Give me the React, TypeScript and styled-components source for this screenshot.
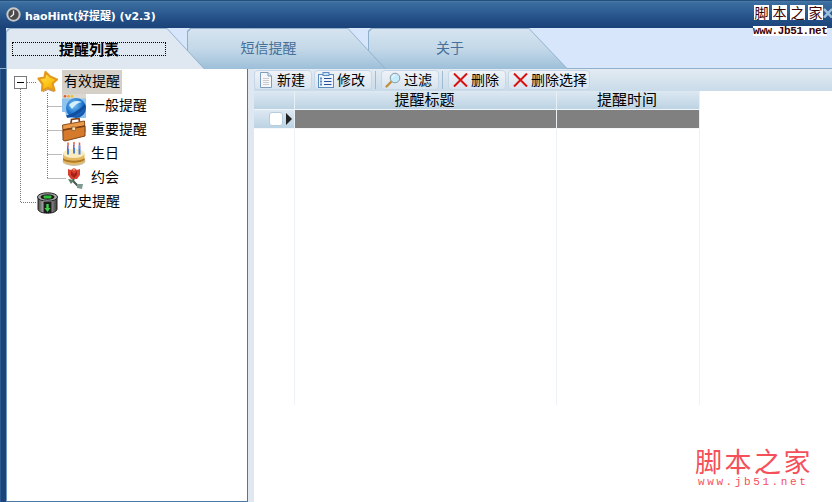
import React from "react";
import styled, { createGlobalStyle } from "styled-components";

const CJK = `"Noto Sans CJK SC", "Liberation Sans", sans-serif`;

const Global = createGlobalStyle`
  html, body { margin: 0; padding: 0; background: #fff; overflow: hidden; }
  * { box-sizing: border-box; }
`;

const Window = styled.div`
  position: relative;
  width: 832px;
  height: 502px;
  overflow: hidden;
  display: flex;
  flex-direction: column;
  background: #fff;
  font-family: ${CJK};
  color: #000;
`;

const TitleBar = styled.div`
  height: 28px;
  flex: none;
  display: flex;
  align-items: center;
  gap: 4px;
  padding: 0 0 0 6px;
  border-top: 1px solid #24507f;
  background: linear-gradient(#4d7aa8 0, #3a6c9f 2px, #2f5f94 10px, #234f85 18px, #1b4279 100%);
`;

const TitleText = styled.span`
  font-family: "DejaVu Sans", "Noto Sans CJK SC", sans-serif;
  font-weight: 700;
  font-size: 11px;
  letter-spacing: -0.1px;
  color: #fff;
  white-space: nowrap;
`;

const TabStrip = styled.div`
  height: 41px;
  flex: none;
  display: flex;
  padding-left: 6px;
  background: #d8e6fb;
  border-bottom: 1px solid #90b0cc;
  box-shadow: inset 6px 0 0 #1c4478;
`;

const Tab = styled.div<{ $width: number; $slant: number; $z: number; $active?: boolean; $pad: number; $overlap: number }>`
  position: relative;
  z-index: ${(p) => p.$z};
  width: ${(p) => p.$width}px;
  margin-left: ${(p) => -p.$overlap}px;
  height: 41px;
  padding-right: ${(p) => p.$pad}px;
  display: flex;
  align-items: center;
  justify-content: center;
  font-size: 14px;
  color: ${(p) => (p.$active ? "#000" : "#46709a")};
  background: #8fb0cc;
  clip-path: polygon(3px 0, ${(p) => p.$width - p.$slant}px 0, ${(p) => p.$width}px 100%, 0 100%, 0 3px);

  &::before {
    content: "";
    position: absolute;
    inset: 1px 0 0 1px;
    background: ${(p) => (p.$active ? "#dfe8f1" : "linear-gradient(#d6e4f0, #c3d8e8 50%, #9dbfd9)")};
    clip-path: polygon(3px 0, ${(p) => p.$width - p.$slant - 1}px 0, ${(p) => p.$width - 2}px 100%, 0 100%, 0 3px);
  }
`;

const TabLabel = styled.span`
  position: relative;
  line-height: 14px;
  margin-bottom: 3px;
`;

const FocusBox = styled.span`
  position: relative;
  width: 154px;
  height: 14px;
  margin-top: 1px;
  padding-bottom: 1px;
  display: flex;
  align-items: center;
  justify-content: center;
  border: 1px dotted #000;
  font-weight: 700;
  font-size: 15px;
  line-height: 12px;
`;

const Body = styled.div`
  flex: 1;
  display: flex;
  min-height: 0;
`;

const LeftEdge = styled.div`
  width: 6px;
  flex: none;
  background: linear-gradient(90deg, #2a5a90 0, #2a5a90 1px, #1c4478 1px);
`;

const TreePanel = styled.div`
  position: relative;
  width: 242px;
  flex: none;
  background: #fff;
  border: 1px solid #4a79a8;
  border-left-color: #6f98c0;
  border-top: 0;
  padding-top: 1px;
`;

const TreeLines = styled.svg`
  position: absolute;
  left: 0;
  top: 0;
  pointer-events: none;
`;

const TreeRow = styled.div<{ $level: number }>`
  position: relative;
  height: 24px;
  display: flex;
  align-items: center;
  padding-left: ${(p) => (p.$level === 0 ? 29 : 55)}px;
`;

const TreeIcon = styled.span`
  width: 24px;
  height: 24px;
  flex: none;
  display: block;
  & > svg { display: block; overflow: visible; }
`;

const TreeLabel = styled.span<{ $selected?: boolean; $level: number }>`
  height: 24px;
  margin-left: ${(p) => (p.$level === 0 ? 2 : 3)}px;
  padding: 0 2px;
  background: ${(p) => (p.$selected ? "#d4d0c8" : "transparent")};
  font-size: 14px;
  line-height: 21px;
  white-space: nowrap;
`;

const Expander = styled.span`
  position: absolute;
  left: 7px;
  top: 6px;
  width: 13px;
  height: 13px;
  border: 1px solid #7a7a7a;
  background: #fff;
  &::after {
    content: "";
    position: absolute;
    left: 2px;
    right: 2px;
    top: 5px;
    height: 1px;
    background: #000;
  }
`;

const Gutter = styled.div`
  width: 6px;
  flex: none;
  background: #dfe8f1;
`;

const Right = styled.div`
  flex: 1;
  display: flex;
  flex-direction: column;
  min-width: 0;
  background: #fff;
`;

const Toolbar = styled.div`
  height: 22px;
  flex: none;
  display: flex;
  align-items: flex-start;
  padding-top: 1px;
  background: linear-gradient(#e3ebf3, #c9dbe9);
`;

const ToolButton = styled.div<{ $width: number; $gap?: number }>`
  width: ${(p) => p.$width}px;
  margin-left: ${(p) => p.$gap ?? 0}px;
  height: 20px;
  flex: none;
  display: flex;
  align-items: center;
  gap: 3px;
  padding-left: 3px;
  border: 1px solid #c6d8e7;
  border-radius: 4px;
  background: linear-gradient(#eff3f7, #d8e4ef);
  font-size: 14px;
  white-space: nowrap;
  & > svg { flex: none; }
`;

const ToolText = styled.span`
  line-height: 16px;
  margin-bottom: 2px;
`;

const ToolSep = styled.span<{ $left: number; $right: number }>`
  width: 1px;
  height: 18px;
  margin: 1px ${(p) => p.$right}px 0 ${(p) => p.$left}px;
  flex: none;
  background: #9dbbd3;
`;

const Grid = styled.div`
  width: 446px;
  display: grid;
  grid-template-columns: 41px 262px 143px;
  grid-template-rows: 19px 19px 276px;
`;

const HeadCell = styled.div`
  display: flex;
  align-items: center;
  justify-content: center;
  padding: 0 2px 2px 0;
  border-right: 1px solid #e8f0f6;
  border-bottom: 1px solid #f0f5f9;
  background: linear-gradient(#dde8f2, #bcd3e3);
  font-size: 15px;
  line-height: 16px;
`;

const RowHead = styled.div`
  display: flex;
  align-items: center;
  justify-content: flex-end;
  gap: 3px;
  padding-right: 2px;
  border-right: 1px solid #e8f0f6;
  border-bottom: 1px solid #f5f8fb;
  background: linear-gradient(#dde8f2, #bcd3e3);
`;

const RowCheck = styled.span`
  width: 14px;
  height: 14px;
  background: #fff;
  border: 1px solid #b4cde0;
  border-radius: 3px;
`;

const RowArrow = styled.span`
  width: 0;
  height: 0;
  border-left: 6px solid #222;
  border-top: 6px solid transparent;
  border-bottom: 6px solid transparent;
`;

const SelCell = styled.div`
  background: #808080;
  border-right: 1px solid #e8f0f6;
  border-bottom: 1px solid #f5f8fb;
`;

const EmptyCell = styled.div`
  background: #fff;
  border-right: 1px solid #edf2f8;
`;

const MarkTop = styled.div`
  position: absolute;
  left: 754px;
  top: 5px;
  display: flex;
  gap: 3px;
`;

const MarkTopChar = styled.span`
  width: 15px;
  height: 15px;
  background: #fff;
  color: #3c0000;
  font-size: 14px;
  line-height: 15px;
  text-align: center;
`;

const MarkTopUrl = styled.div`
  position: absolute;
  left: 753px;
  top: 26px;
  width: 74px;
  height: 10px;
  background: #fff;
  color: #3c0000;
  font-family: "Liberation Mono", monospace;
  font-size: 11px;
  font-weight: 700;
  line-height: 10px;
  letter-spacing: -0.4px;
  white-space: nowrap;
`;

const CloseMark = styled.svg`
  position: absolute;
  left: 823px;
  top: 8px;
`;

const MarkBottom = styled.div`
  position: absolute;
  left: 695px;
  top: 444px;
  width: 118px;
  color: #f5505a;
`;

const MarkBottomTitle = styled.div`
  font-size: 27px;
  line-height: 33px;
  height: 33px;
  letter-spacing: 2.5px;
  white-space: nowrap;
`;

const MarkBottomUrl = styled.div`
  font-family: "Liberation Mono", monospace;
  font-size: 11px;
  line-height: 11px;
  letter-spacing: 2.6px;
  padding-left: 3px;
  white-space: nowrap;
`;

const ClockIcon = () => (
  <svg width="15" height="15" viewBox="0 0 15 15">
    <circle cx="7.5" cy="7.5" r="6.2" fill="#4a4a4a" stroke="#c8c8c8" strokeWidth="2" />
    <path d="M7.5 3.5V7.5L4.5 10" stroke="#f2f2f2" strokeWidth="1.3" fill="none" />
  </svg>
);

const StarIcon = () => (
  <svg width="24" height="24" viewBox="0 0 24 24">
    <defs>
      <linearGradient id="st" x1="0.2" y1="0" x2="0.8" y2="1">
        <stop offset="0" stopColor="#ffe35a" />
        <stop offset="0.6" stopColor="#fdc413" />
        <stop offset="1" stopColor="#f09a10" />
      </linearGradient>
    </defs>
    <path d="M9.500 2 L14 6.500 L21 9.500 L16.500 13.500 L18.500 20.500 L12 18 L6 20.500 L6.500 14 L2.500 8.500 L8.500 7.500 Z" fill="url(#st)" stroke="#e39a1c" strokeWidth="2.200" strokeLinejoin="round" />
    <path d="M7 21.500 L12 19.500 L18 21.500" fill="none" stroke="#c09060" strokeWidth="1" />
  </svg>
);

const WebIcon = () => (
  <svg width="24" height="24" viewBox="0 0 24 24">
    <defs>
      <radialGradient id="gl" cx="0.4" cy="0.35" r="0.7">
        <stop offset="0" stopColor="#7fc4f2" />
        <stop offset="0.6" stopColor="#1f77d0" />
        <stop offset="1" stopColor="#0f4aa0" />
      </radialGradient>
    </defs>
    <rect x="0" y="0" width="24" height="24" fill="#8fc3ee" />
    <rect x="0" y="0" width="24" height="4.500" fill="#dcd8d0" />
    <circle cx="3" cy="2.200" r="1.300" fill="#e05a30" />
    <circle cx="6.500" cy="2.200" r="1.300" fill="#eda820" />
    <circle cx="10" cy="2.200" r="1.300" fill="#e8c030" />
    <circle cx="14" cy="14" r="10" fill="url(#gl)" />
    <path d="M7 11 Q12 5 20 8 Q14 9 10 15Z" fill="#d6effc" />
    <path d="M0 22 Q11 22 23 10 L24 13 Q13 25 2 24 H0Z" fill="#124f9e" />
    <path d="M0 18 H3 L5 24 H0Z" fill="#fff" />
  </svg>
);

const CaseIcon = () => (
  <svg width="24" height="24" viewBox="0 0 24 24">
    <path d="M9 5 L9.500 1.500 L17 0.500 L17.500 4" fill="none" stroke="#7a3f16" strokeWidth="1.700" />
    <path d="M0.500 7 L22.500 3 L23 14 L1.500 19Z" fill="#ea9a48" stroke="#8a4f1e" />
    <path d="M1 12 L23 8 L23 18 L3 23 L1 22Z" fill="#d57a2a" stroke="#7a4516" />
    <path d="M1 12 L23 8" stroke="#7a3f16" strokeWidth="1.400" />
    <rect x="10" y="9" width="3.500" height="3.500" fill="#f2e2b0" stroke="#7a4516" strokeWidth="0.600" />
  </svg>
);

const CakeIcon = () => (
  <svg width="24" height="24" viewBox="0 0 24 24">
    <ellipse cx="12" cy="19" rx="11.500" ry="5" fill="#c8bfa8" />
    <path d="M1 11.500h21.500v7c0 2.500-5 4-10.750 4S1 21 1 18.500Z" fill="#e6b860" />
    <ellipse cx="11.750" cy="11.500" rx="10.750" ry="4.500" fill="#f8ecc0" />
    <path d="M1 16c4 3.500 17.500 3.500 21.500 0v2c-4 3.500-17.500 3.500-21.500 0Z" fill="#b07a28" />
    <path d="M6 3.500v9" stroke="#4a80d8" strokeWidth="2" />
    <path d="M12 2.500v9" stroke="#4a80d8" strokeWidth="2" />
    <path d="M17.500 3.500v9" stroke="#4a80d8" strokeWidth="2" />
    <path d="M6 5.500h1M12 4.500h1M17.500 5.500h1" stroke="#f4a8b8" strokeWidth="2" />
    <path d="M6 0.500v3M12 0v2.500M17.500 0.500v3" stroke="#e85a3a" strokeWidth="1.500" />
  </svg>
);

const RoseIcon = () => (
  <svg width="24" height="24" viewBox="0 0 24 24">
    <path d="M12 11 L11 15 L17 21" stroke="#4a5a50" strokeWidth="2.200" fill="none" />
    <path d="M12 14 L6 13 L9 18Z" fill="#5e7a68" />
    <path d="M15 18 L21 18 L20 23 L15 22Z" fill="#7f9a90" />
    <path d="M6 3 L9 4 L12 2 L15 4 L18 3 L18 9 L15 13 L9 13 L6 9Z" fill="#d8402f" />
    <path d="M9 5 L12 8 L15 5 V9 L12 12 L9 9Z" fill="#a52016" />
    <path d="M10.500 2.500 L12 5 L13.500 2.500Z" fill="#f5a080" />
  </svg>
);

const DrumIcon = () => (
  <svg width="24" height="24" viewBox="0 0 24 24">
    <defs>
      <linearGradient id="dr" x1="0" x2="1" y1="0" y2="0">
        <stop offset="0" stopColor="#4a4a4a" />
        <stop offset="0.35" stopColor="#bdbdbd" />
        <stop offset="0.7" stopColor="#8a8a8a" />
        <stop offset="1" stopColor="#3a3a3a" />
      </linearGradient>
    </defs>
    <path d="M2 7v12c0 2.500 4 4.200 9.500 4.200s9.500-1.700 9.500-4.200V7Z" fill="url(#dr)" stroke="#222" />
    <ellipse cx="11.500" cy="7" rx="10" ry="4.200" fill="#a8a8a8" stroke="#222" />
    <ellipse cx="11.500" cy="7" rx="7" ry="2.800" fill="#1a1a1a" />
    <rect x="7.500" y="5.500" width="8" height="3" rx="1" fill="#2fbf3a" />
    <rect x="7.500" y="12" width="8" height="11" fill="#1c1c1c" />
    <path d="M11.500 22 L8.500 18 H10.300 V14 H12.700 V18 H14.500Z" fill="#3fd04a" />
  </svg>
);

const DocIcon = () => (
  <svg width="16" height="16" viewBox="-1 0 16 16">
    <path d="M1.500 0.500H9L12.500 4V15.500H1.500Z" fill="#f6f7fa" stroke="#7f9dbd" />
    <path d="M9 0.500V4H12.500" fill="#dfe6ee" stroke="#7f9dbd" />
    <path d="M4 6.500H10M4 8.500H10M4 10.500H10M4 12.500H10" stroke="#ccc" />
  </svg>
);

const ListIcon = () => (
  <svg width="16" height="16" viewBox="0 0 16 16">
    <rect x="0.500" y="2.500" width="15" height="13" fill="#eef4fb" stroke="#5b8cc0" />
    <rect x="5" y="0.500" width="6" height="3" fill="#cfdef0" stroke="#5b8cc0" />
    <path d="M6 6.500H13.500M6 9.500H13.500M6 12.500H13.500" stroke="#274f9a" />
    <rect x="2" y="5.500" width="2" height="2" fill="#5b8cc0" />
    <rect x="2" y="8.500" width="2" height="2" fill="#5b8cc0" />
    <rect x="2" y="11.500" width="2" height="2" fill="#5b8cc0" />
  </svg>
);

const SearchIcon = () => (
  <svg width="16" height="16" viewBox="0 0 16 16">
    <path d="M6.500 9.500 L1.500 14.500" stroke="#c09040" strokeWidth="2.400" strokeLinecap="round" />
    <circle cx="10" cy="6" r="4.800" fill="#c4ecfa" stroke="#8a9aa8" />
    <path d="M7.500 5.500A3 3 0 0 1 10 3.200" stroke="#fff" fill="none" />
  </svg>
);

const CrossIcon = () => (
  <svg width="16" height="14" viewBox="-1 0 16 14">
    <path d="M1 0.500 L14 13.500 M14 0.500 L1 13.500" stroke="#d81010" strokeWidth="2" />
  </svg>
);

const rows: { level: number; label: string; icon: React.ReactNode; selected?: boolean }[] = [
  { level: 0, label: "有效提醒", icon: <StarIcon />, selected: true },
  { level: 1, label: "一般提醒", icon: <WebIcon /> },
  { level: 1, label: "重要提醒", icon: <CaseIcon /> },
  { level: 1, label: "生日", icon: <CakeIcon /> },
  { level: 1, label: "约会", icon: <RoseIcon /> },
  { level: 0, label: "历史提醒", icon: <DrumIcon /> },
];

export default function App() {
  return (
    <Window>
      <Global />
      <TitleBar>
        <ClockIcon />
        <TitleText>haoHint(好提醒) (v2.3)</TitleText>
      </TitleBar>
      <TabStrip>
        <Tab $width={199} $slant={38} $z={3} $active $pad={33} $overlap={0}>
          <FocusBox>提醒列表</FocusBox>
        </Tab>
        <Tab $width={199} $slant={38} $z={2} $pad={36} $overlap={18}>
          <TabLabel>短信提醒</TabLabel>
        </Tab>
        <Tab $width={200} $slant={39} $z={1} $pad={36} $overlap={18}>
          <TabLabel>关于</TabLabel>
        </Tab>
      </TabStrip>
      <Body>
        <LeftEdge />
        <TreePanel>
          <TreeLines width="240" height="220" viewBox="0 0 240 220">
            <g stroke="#777" strokeDasharray="1 1" fill="none">
              <path d="M13.500 20V133.500H29" />
              <path d="M20 13.500H29" />
              <path d="M40.500 24V109.500" />
              <path d="M40.500 37.500H55M40.500 61.500H55M40.500 85.500H55M40.500 109.500H59" />
            </g>
          </TreeLines>
          {rows.map((r) => (
            <TreeRow key={r.label} $level={r.level}>
              {r.selected && <Expander />}
              <TreeIcon>{r.icon}</TreeIcon>
              <TreeLabel $selected={r.selected} $level={r.level}>{r.label}</TreeLabel>
            </TreeRow>
          ))}
        </TreePanel>
        <Gutter />
        <Right>
          <Toolbar>
            <ToolButton $width={58}><DocIcon /><ToolText>新建</ToolText></ToolButton>
            <ToolButton $width={58} $gap={2}><ListIcon /><ToolText>修改</ToolText></ToolButton>
            <ToolSep $left={3} $right={5} />
            <ToolButton $width={58}><SearchIcon /><ToolText>过滤</ToolText></ToolButton>
            <ToolSep $left={3} $right={5} />
            <ToolButton $width={58}><CrossIcon /><ToolText>删除</ToolText></ToolButton>
            <ToolButton $width={82} $gap={2}><CrossIcon /><ToolText>删除选择</ToolText></ToolButton>
          </Toolbar>
          <Grid>
            <HeadCell />
            <HeadCell>提醒标题</HeadCell>
            <HeadCell>提醒时间</HeadCell>
            <RowHead><RowCheck /><RowArrow /></RowHead>
            <SelCell />
            <SelCell />
            <EmptyCell />
            <EmptyCell />
            <EmptyCell />
          </Grid>
        </Right>
      </Body>
      <CloseMark width="9" height="10" viewBox="0 0 9 10">
        <path d="M1 1 L9 9.500 M9 1 L1 9.500" stroke="#9fc0dc" strokeWidth="2.500" />
      </CloseMark>
      <MarkTop>
        {"脚本之家".split("").map((c) => (
          <MarkTopChar key={c}>{c}</MarkTopChar>
        ))}
      </MarkTop>
      <MarkTopUrl>www.Jb51.net</MarkTopUrl>
      <MarkBottom>
        <MarkBottomTitle>脚本之家</MarkBottomTitle>
        <MarkBottomUrl>www.jb51.net</MarkBottomUrl>
      </MarkBottom>
    </Window>
  );
}
